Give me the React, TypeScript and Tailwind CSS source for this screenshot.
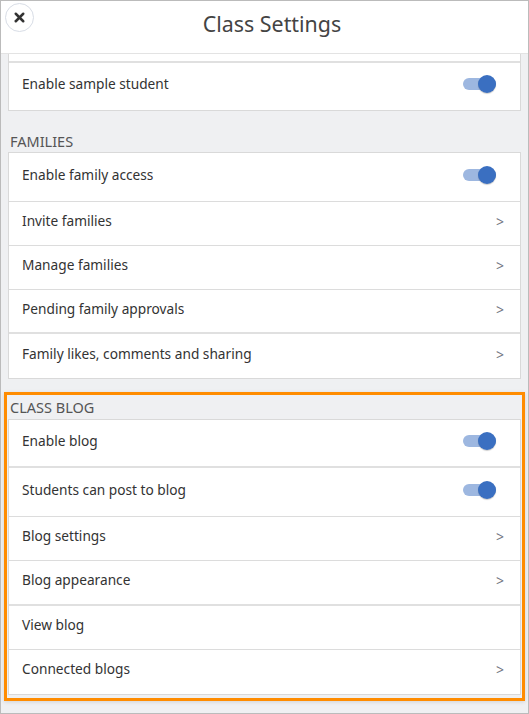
import { X } from "lucide-react";

type Row = { label: string; kind: "toggle" | "arrow" | "none"; h: string; thick?: boolean; pb?: string };

const families: Row[] = [
    { label: "Enable family access", kind: "toggle", h: "h-[49px]" },
    { label: "Invite families", kind: "arrow", h: "h-[44px]" },
    { label: "Manage families", kind: "arrow", h: "h-[44px]" },
    { label: "Pending family approvals", kind: "arrow", h: "h-[44px]", thick: true },
    { label: "Family likes, comments and sharing", kind: "arrow", h: "h-[44px]" },
];

const blog: Row[] = [
    { label: "Enable blog", kind: "toggle", h: "h-[48px]", thick: true },
    { label: "Students can post to blog", kind: "toggle", h: "h-[49px]" },
    { label: "Blog settings", kind: "arrow", h: "h-[44px]" },
    { label: "Blog appearance", kind: "arrow", h: "h-[45px]", thick: true },
    { label: "View blog", kind: "none", h: "h-[44px]" },
    { label: "Connected blogs", kind: "arrow", h: "h-[44px]", pb: "pb-[6px]" },
];

function Toggle() {
    return (
        <span className="relative mr-[8px] block h-[12px] w-[33px] rounded-full bg-[#9db7e0]">
            <span className="absolute right-0 top-[-3px] h-[18px] w-[18px] rounded-full bg-[#3a6fc1] shadow-[0_1px_1px_rgba(0,0,0,0.2)]" />
        </span>
    );
}

function SettingRow({ row, last }: { row: Row; last: boolean }) {
    return (
        <div
            className={`${row.h} ${row.pb ?? "pb-[4px]"} flex items-center justify-between pl-[13px] pr-[16px] ${
                last ? "" : row.thick ? "border-b-2 border-[#e0e0e0]" : "border-b border-[#dcdcdc]"
            }`}
        >
            <span className="text-[13.7px] text-[#333]">{row.label}</span>
            {row.kind === "toggle" && <Toggle />}
            {row.kind === "arrow" && <span className="text-[14px] text-[#71767f]">&gt;</span>}
        </div>
    );
}

function Card({ rows }: { rows: Row[] }) {
    return (
        <div className="border border-[#d9d9d9] bg-white">
            {rows.map((r, i) => (
                <SettingRow key={r.label} row={r} last={i === rows.length - 1} />
            ))}
        </div>
    );
}

export default function App() {
    return (
        <div
            className="h-[714px] w-[529px] overflow-hidden border border-[#bbbbbb] bg-[#eff0f2]"
            style={{ fontFamily: '"Noto Sans", "Open Sans", sans-serif' }}
        >
            <header className="relative flex h-[53px] items-center justify-center border-b border-[#e3e3e3] bg-white pb-[6px] pl-[15px]">
                <button className="absolute left-[4px] top-[2px] flex h-[29px] w-[29px] items-center justify-center rounded-full border border-[#d8dde6] bg-white text-[#333]">
                    <X size={15} strokeWidth={4} />
                </button>
                <h1 className="text-[21.4px] text-[#444]">Class Settings</h1>
            </header>

            <main className="px-[7px]">
                <div className="border-x border-b border-[#d9d9d9] bg-white">
                    <div className="h-[9px] border-b-2 border-[#e0e0e0]" />
                    <div className="flex h-[47px] items-center justify-between pb-[5px] pl-[13px] pr-[16px]">
                        <span className="text-[13.7px] text-[#333]">Enable sample student</span>
                        <Toggle />
                    </div>
                </div>

                <h2 className="mt-[22px] h-[19px] pl-[2px] text-[14.5px] leading-[17px] text-[#555]">FAMILIES</h2>
                <Card rows={families} />

                <section className="relative mt-[20px]">
                    <span className="absolute inset-x-[-4px] bottom-[-6px] top-[-7px] border-[3px] border-[#ff8c00] shadow-[0_1px_4px_rgba(0,0,0,0.12)]" />
                    <h2 className="h-[20px] pl-[2px] text-[14.5px] leading-[17px] text-[#555]">CLASS BLOG</h2>
                    <Card rows={blog} />
                </section>
            </main>
        </div>
    );
}
